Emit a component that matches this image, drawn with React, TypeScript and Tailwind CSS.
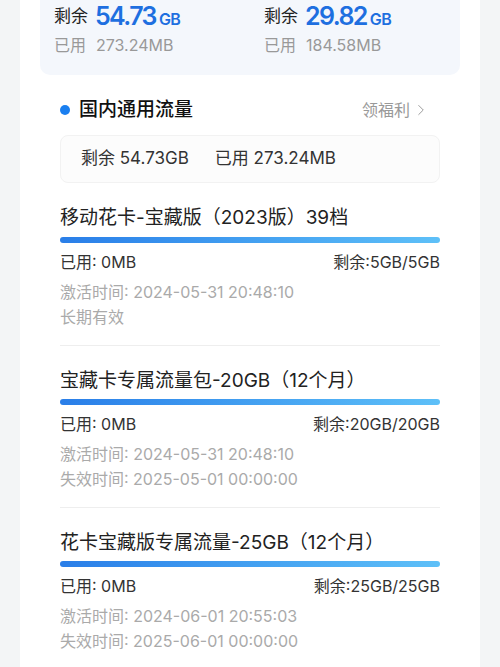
import { ChevronRight } from "lucide-react";

type Pack = {
  name: string;
  total: string;
  activated: string;
  expires?: string;
};

const packs: Pack[] = [
  { name: "移动花卡-宝藏版（2023版）39档", total: "5GB", activated: "2024-05-31 20:48:10" },
  { name: "宝藏卡专属流量包-20GB（12个月）", total: "20GB", activated: "2024-05-31 20:48:10", expires: "2025-05-01 00:00:00" },
  { name: "花卡宝藏版专属流量-25GB（12个月）", total: "25GB", activated: "2024-06-01 20:55:03", expires: "2025-06-01 00:00:00" },
];

function Summary({ left, used }: { left: string; used: string }) {
  return (
    <div className="flex flex-col">
      <div className="flex h-[32px] items-center text-[#1e6fe0]">
        <span className="mr-[7px] text-[17px] text-[#222]">剩余</span>
        <span className="text-[25px] font-semibold tracking-[-1.6px]">{left}</span>
        <span className="ml-[3px] mt-[4px] text-[16px] font-semibold tracking-[-0.5px]">GB</span>
      </div>
      <div className="flex h-[24px] items-center text-[16px] text-[#999]">
        <span className="mr-[10px]">已用</span>
        <span>{used}</span>
      </div>
    </div>
  );
}

function PackItem({ pack, first, last }: { pack: Pack; first: boolean; last: boolean }) {
  return (
    <div className={last ? "pt-[21px]" : "border-b border-[#eeeeee] pb-[15px] pt-[21px]"}>
      <p className="h-[28px] text-[19px] leading-[28px] text-[#222]">{pack.name}</p>
      <div
        className={`${first ? "mt-[5px]" : "mt-[4px]"} h-[6px] rounded-full bg-gradient-to-r from-[#2a7ee8] to-[#5ec0f8]`}
      />
      <div className="mt-[8px] flex h-[22px] items-center justify-between text-[16px] text-[#333]">
        <span>已用: 0MB</span>
        <span>
          剩余:{pack.total}/{pack.total}
        </span>
      </div>
      <div className="mt-[7px] text-[16px] leading-[25px] text-[#aaa]">
        <p>激活时间: {pack.activated}</p>
        <p>{pack.expires ? `失效时间: ${pack.expires}` : "长期有效"}</p>
      </div>
    </div>
  );
}

export default function App() {
  return (
    <div
      className="min-h-screen overflow-hidden bg-[#f3f5f6] px-[20px]"
      style={{ fontFamily: '"Inter", "Noto Sans CJK SC", sans-serif' }}
    >
      <div className="-mt-[30px] bg-white px-[20px] pb-[30px]">
        <div className="grid grid-cols-[210px_1fr] rounded-[10px] bg-[#f4f7fc] px-[14px] pb-[18px] pt-[31px]">
          <Summary left="54.73" used="273.24MB" />
          <Summary left="29.82" used="184.58MB" />
        </div>

        <div className="px-[20px]">
          <div className="mt-[21px] flex h-[28px] items-center justify-between">
            <div className="flex items-center">
              <span className="mr-[9px] h-[10px] w-[10px] rounded-full bg-[#1a7ff0]" />
              <span className="text-[19px] font-medium text-[#111]">国内通用流量</span>
            </div>
            <div className="mr-[10px] flex items-center text-[16px] text-[#999]">
              领福利
              <ChevronRight className="ml-[2px] h-[18px] w-[18px]" strokeWidth={1.3} />
            </div>
          </div>

          <div className="mt-[11px] flex h-[48px] items-center gap-[26px] rounded-[8px] border border-[#f2f2f2] bg-[#fcfcfc] px-[20px] text-[17px] text-[#333]">
            <span>剩余 54.73GB</span>
            <span>已用 273.24MB</span>
          </div>

          <div>
            {packs.map((p, i) => (
              <PackItem key={p.name} pack={p} first={i === 0} last={i === packs.length - 1} />
            ))}
          </div>
        </div>
      </div>
    </div>
  );
}
